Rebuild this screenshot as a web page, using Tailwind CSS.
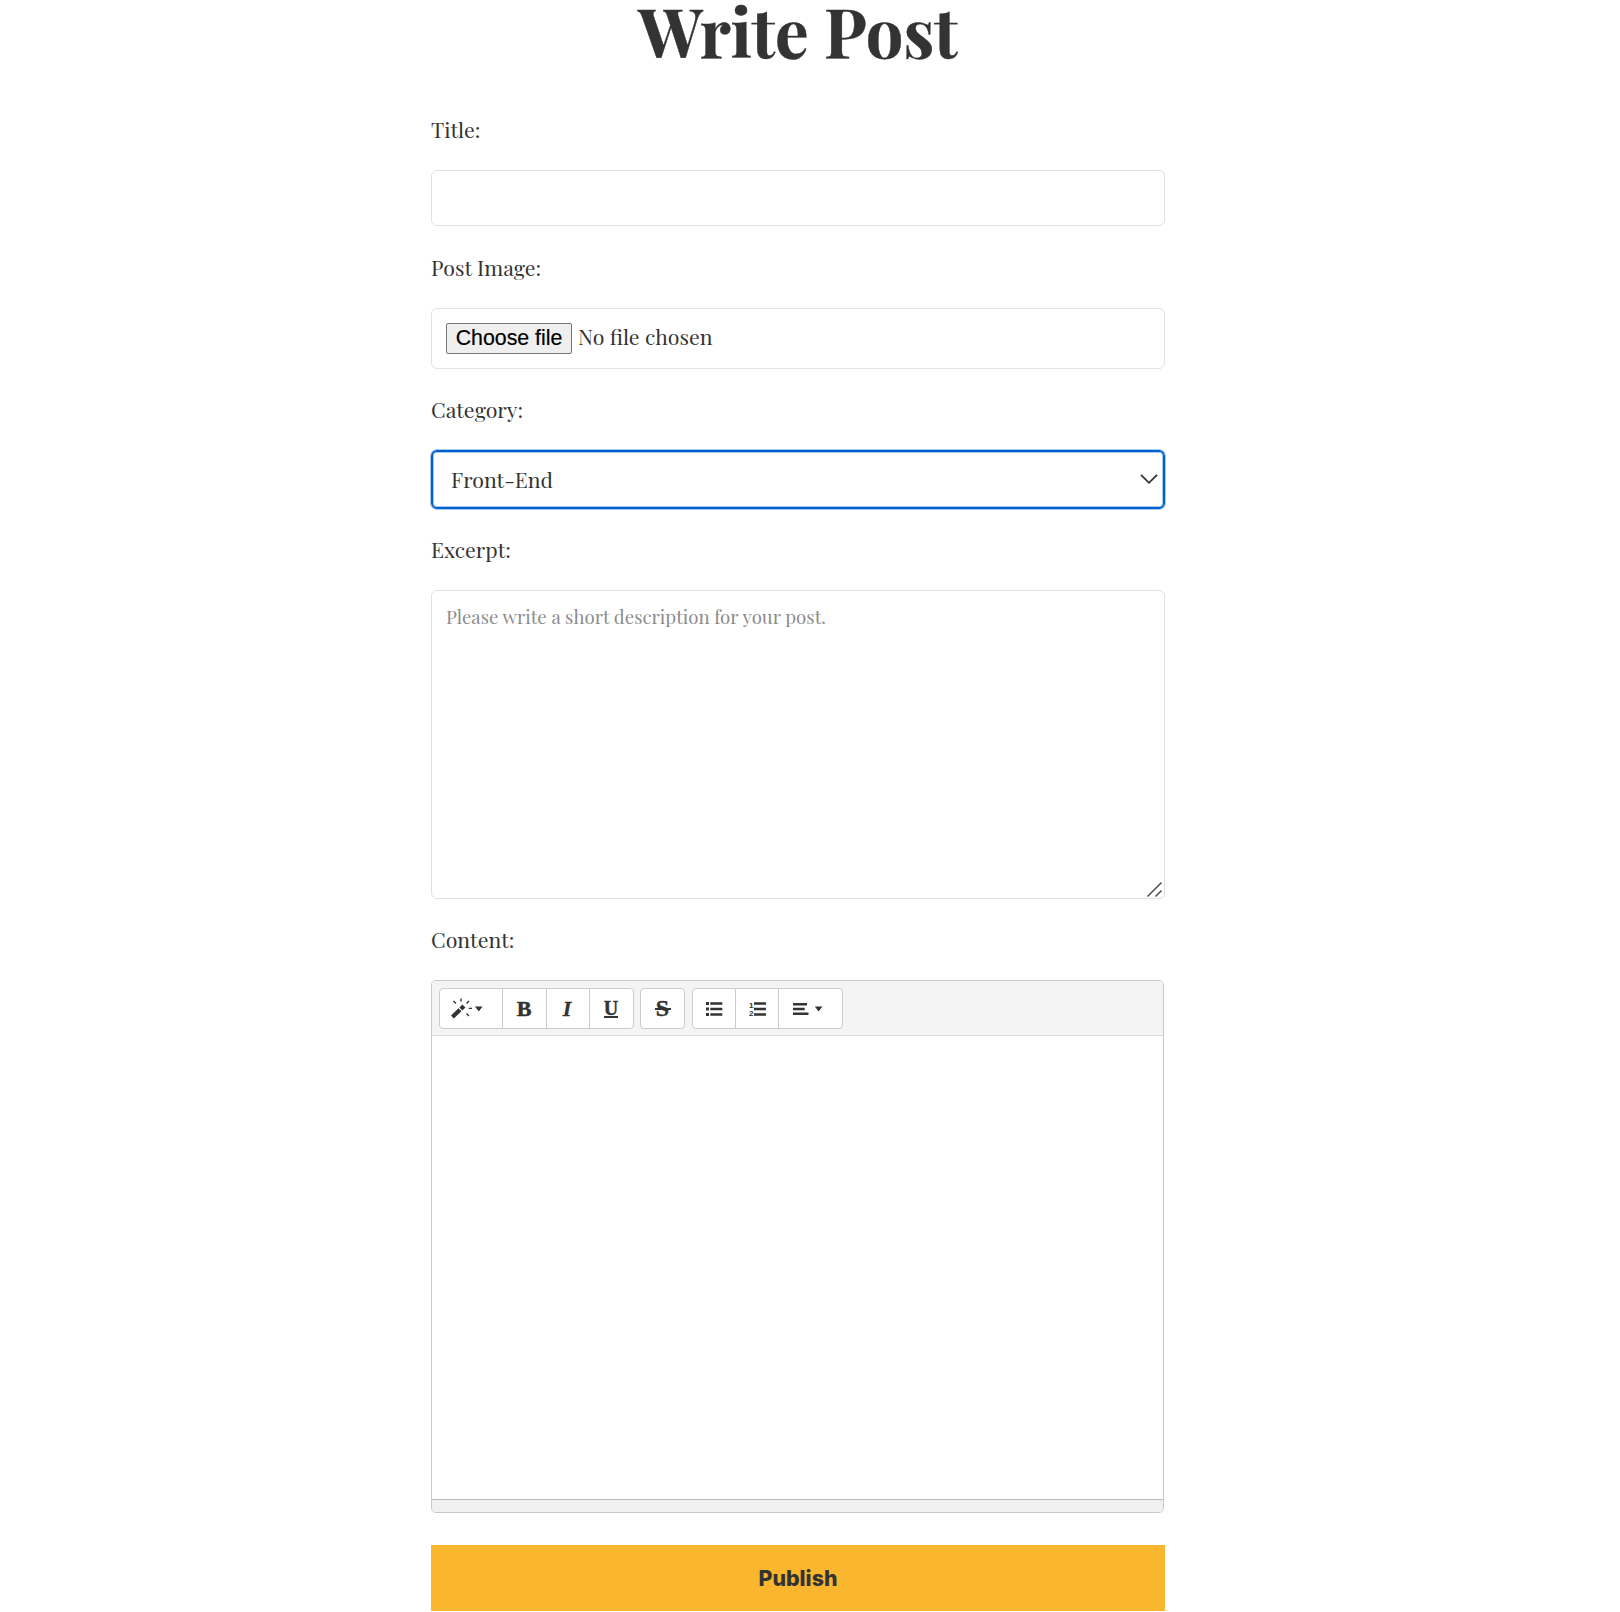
<!DOCTYPE html>
<html lang="en">
<head>
<meta charset="utf-8">
<title>Write Post</title>
<script src="https://cdn.jsdelivr.net/npm/@tailwindcss/browser@4"></script>
</head>
<body class="bg-white text-[#333] font-['Playfair_Display','Liberation_Serif',serif] overflow-hidden">
<main class="ml-[431px] w-[734px] flex flex-col text-[21.33px] leading-[30px] whitespace-nowrap">
  <h1 class="h-[114px] text-center text-[66.67px] leading-[61px] font-bold [-webkit-text-stroke:0.4px_#333]">Write Post</h1>

  <label>Title:</label>
  <div class="mt-[26px] h-14 rounded-md border border-[#e1e1e4]"></div>

  <label class="mt-[26px]">Post Image:</label>
  <div class="mt-[26px] h-[61px] rounded-md border border-[#e1e1e6] flex items-center pl-[14px]">
    <button class="h-[31px] w-[126px] rounded-[2px] border border-[#767676] bg-[#efefef] text-black font-['Liberation_Sans',sans-serif] text-[21.33px] leading-[29px] [-webkit-text-stroke:0.2px_#000]">Choose file</button>
    <span class="ml-[6px] mb-[6px]">No file chosen</span>
  </div>

  <label class="mt-[25px]">Category:</label>
  <div class="mt-[26px] h-[59px] rounded-md border-2 border-[#0060d0] shadow-[0_0_0_1px_#a9c8ee,inset_0_0_0_1px_#a9c8ee] flex items-center justify-between pl-[18px] pr-[5px]">
    <span class="mb-px">Front-End</span>
    <svg class="w-[18px] h-[12px] mb-[2px]" viewBox="0 0 18 12" fill="none" stroke="#333" stroke-width="1.8"><path d="M1 1.8 L9 9.8 L17 1.8"/></svg>
  </div>

  <label class="mt-[25px]">Excerpt:</label>
  <div class="relative mt-[26px] h-[309px] rounded-md border border-[#e1e1e1] pl-[14px] pt-[11px] text-[18.67px] text-[#8c8c8c]">Please write a short description for your post.
    <svg class="absolute right-[1px] bottom-0 w-[17px] h-[17px]" viewBox="0 0 17 17" fill="none" stroke="#555" stroke-width="1.6"><path d="M1.5 15.5 L15.5 1.5 M9.5 15.5 L15.5 9.5"/></svg>
  </div>

  <label class="mt-[25px]">Content:</label>
  <section class="mt-[26px] w-[733px] h-[533px] rounded-[5px] border border-[#c8c8c8] flex flex-col overflow-hidden">
    <div class="h-[55px] bg-[#f4f4f4] border-b border-[#d8d8d8] flex items-start gap-[6px] pt-[7px] pl-[7px] font-['Liberation_Serif',serif]">
      <div class="flex h-[41px] w-[195px] rounded-[4px] border border-[#ccc] bg-white divide-x divide-[#ccc] overflow-hidden">
        <button class="w-[63px] shrink-0">
          <svg class="w-[62px] h-[39px]" viewBox="440 989 62 39">
            <g fill="none" stroke="#333">
              <path d="M452.4 1017 L460 1009.8" stroke-width="4.2"/>
              <path d="M460.9 1008.9 L463.9 1006" stroke-width="4.2"/>
              <path d="M453.5 1001 L456 1003.5 M461 998.4 V1001.6 M469 1001 L466.5 1003.5 M468.7 1008.4 H472 M466.5 1013.5 L469 1016" stroke-width="1.4"/>
            </g>
            <path d="M475 1006.4 H482.6 L478.8 1011.4 Z" fill="#333"/>
          </svg>
        </button>
        <button class="w-[44px] shrink-0 pr-px text-[22px] leading-[39px] font-bold [-webkit-text-stroke:0.5px_#333]">B</button>
        <button class="w-[43px] shrink-0 pr-[2px] text-[22px] leading-[39px] font-bold italic [-webkit-text-stroke:0.3px_#333]">I</button>
        <button class="w-[43px] shrink-0 pr-px flex flex-col items-center">
          <span class="mt-[8px] h-[19px] text-[20px] leading-[22px] font-bold [-webkit-text-stroke:0.4px_#333]">U</span><span class="h-[1.5px] w-[14px] bg-[#333]"></span>
        </button>
      </div>
      <div class="flex h-[41px] w-[45px] rounded-[4px] border border-[#ccc] bg-white">
        <button class="relative w-full text-[24px] leading-[39px] font-bold [-webkit-text-stroke:0.4px_#333]">S<span class="absolute left-[14px] top-[19px] h-[2px] w-[16px] bg-[#333]"></span></button>
      </div>
      <div class="ml-px flex h-[41px] w-[151px] rounded-[4px] border border-[#ccc] bg-white divide-x divide-[#ccc] overflow-hidden">
        <button class="w-[43px] shrink-0">
          <svg class="w-[42px] h-[39px]" viewBox="693 989 42 39" fill="#333"><path d="M706 1002h3v3h-3z M706 1007.5h3v3h-3z M706 1013h3v3h-3z M710.3 1002.2h12v2.6h-12z M710.3 1007.7h12v2.6h-12z M710.3 1013.2h12v2.6h-12z"/></svg>
        </button>
        <button class="w-[43px] shrink-0">
          <svg class="w-[42px] h-[39px]" viewBox="736 989 42 39" fill="#333"><path d="M754 1002.2h12v2.6h-12z M754 1007.7h12v2.6h-12z M754 1013.2h12v2.6h-12z"/><text x="749" y="1007.6" font-size="8" font-weight="bold" font-family="Liberation Sans">1</text><text x="749" y="1016" font-size="8" font-weight="bold" font-family="Liberation Sans">2</text></svg>
        </button>
        <button class="w-[63px] shrink-0">
          <svg class="w-[63px] h-[39px]" viewBox="779 989 63 39" fill="#333"><path d="M793 1003h14v2.4h-14z M793 1007.8h11.7v2.4h-11.7z M793 1012.6h15.5v2.4h-15.5z M814.8 1006.4h7.6l-3.8 5.2z"/></svg>
        </button>
      </div>
    </div>
    <div class="flex-1"></div>
    <div class="h-[13px] bg-[#f0f0f0] border-t border-[#bbb]"></div>
  </section>

  <button class="mt-8 h-[66px] bg-[#fab62f] font-['Inter',sans-serif] font-extrabold text-[21.33px]">Publish</button>
</main>
</body>
</html>
